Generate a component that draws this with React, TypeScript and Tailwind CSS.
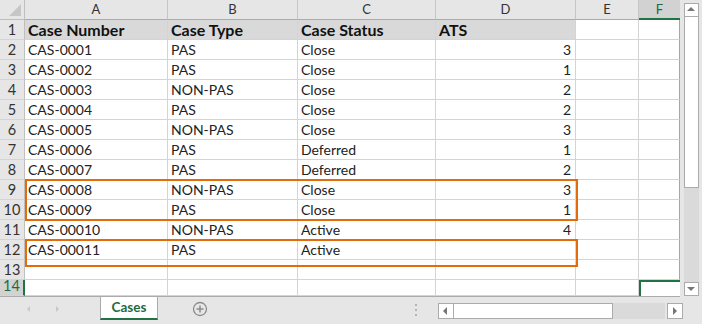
import React from 'react';

type Row = [string, string, string, string];

const COLS = ['A', 'B', 'C', 'D', 'E', 'F'];

const ROWS: Row[] = [
  ['CAS-0001', 'PAS', 'Close', '3'],
  ['CAS-0002', 'PAS', 'Close', '1'],
  ['CAS-0003', 'NON-PAS', 'Close', '2'],
  ['CAS-0004', 'PAS', 'Close', '2'],
  ['CAS-0005', 'NON-PAS', 'Close', '3'],
  ['CAS-0006', 'PAS', 'Deferred', '1'],
  ['CAS-0007', 'PAS', 'Deferred', '2'],
  ['CAS-0008', 'NON-PAS', 'Close', '3'],
  ['CAS-0009', 'PAS', 'Close', '1'],
  ['CAS-00010', 'NON-PAS', 'Active', '4'],
  ['CAS-00011', 'PAS', 'Active', ''],
  ['', '', '', ''],
];

const font = { fontFamily: 'Lato, "Liberation Sans", sans-serif' };

function RowHead({ n, selected, short }: { n: number; selected?: boolean; short?: boolean }) {
  return (
    <div
      className={`flex items-end justify-center text-[14.5px] leading-[18px] ${short ? 'h-[16px]' : 'h-[20px]'} ${
        selected
          ? 'border-r-2 border-r-[#217346] bg-[#d2d2d2] text-[#1e6b41]'
          : 'border-r border-r-[#bfbfbf] bg-[#e6e6e6] text-[#333]'
      } border-b border-b-[#d4d4d4]`}
    >
      {n}
    </div>
  );
}

function Cell({ children, right, last, short }: { children?: React.ReactNode; right?: boolean; last?: boolean; short?: boolean }) {
  return (
    <div
      className={`flex items-end overflow-hidden whitespace-nowrap text-[14px] leading-[18px] text-[#222] ${short ? 'h-[16px]' : 'h-[20px]'} ${
        right ? 'justify-end pr-[4px]' : 'pl-[3px]'
      } border-b border-b-[#d4d4d4] ${last ? 'border-r border-r-[#a6a6a6]' : 'border-r border-r-[#d4d4d4]'}`}
    >
      {children}
    </div>
  );
}

function Tri({ dir }: { dir: 'up' | 'down' | 'left' | 'right' }) {
  const pts = {
    up: '1,6 9,6 5,2',
    down: '1,3 9,3 5,7',
    left: '6,1 6,9 2,5',
    right: '3,1 3,9 7,5',
  }[dir];
  return (
    <svg width="10" height="10" viewBox="0 0 10 10">
      <polygon points={pts} fill="#777" />
    </svg>
  );
}

export default function App() {
  return (
    <div className="h-[324px] w-[702px] overflow-hidden bg-white" style={font}>
      <div className="relative flex h-[297px]">
        <div className="grid w-[680px] grid-cols-[25px_143px_130px_138px_140px_63px_41px] content-start border-b border-b-[#ababab]">
          {/* corner */}
          <div className="relative h-[20px] border-b border-r border-[#bfbfbf] bg-[#e6e6e6]">
            <svg className="absolute bottom-[3px] right-[3px]" width="12" height="12" viewBox="0 0 12 12">
              <polygon points="12,0 12,12 0,12" fill="#c6c6c6" />
            </svg>
          </div>
          {COLS.map((c) =>
            c === 'F' ? (
              <div key={c} className="flex h-[20px] items-center justify-center border-b-2 border-b-[#217346] bg-[#d2d2d2] pt-[1px] text-[13px] text-[#1e6b41]">
                {c}
              </div>
            ) : (
              <div key={c} className="flex h-[20px] items-center justify-center border-b border-r border-b-[#ababab] border-r-[#c6c6c6] bg-[#e6e6e6] text-[13px] text-[#333]">
                {c}
              </div>
            ),
          )}

          {/* row 1 */}
          <RowHead n={1} />
          {['Case Number', 'Case Type', 'Case Status', 'ATS'].map((h) => (
            <div key={h} className="flex h-[20px] items-end border-b border-r border-[#d4d4d4] bg-[#d9d9d9] pl-[3px] text-[16px] leading-[19px] font-bold text-[#111]">
              {h}
            </div>
          ))}
          <Cell />
          <Cell last />

          {ROWS.map((r, i) => (
            <React.Fragment key={i}>
              <RowHead n={i + 2} />
              <Cell>{r[0]}</Cell>
              <Cell>{r[1]}</Cell>
              <Cell>{r[2]}</Cell>
              <Cell right>{r[3]}</Cell>
              <Cell />
              <Cell last />
            </React.Fragment>
          ))}

          {/* row 14 */}
          <RowHead n={14} selected short />
          <Cell short />
          <Cell short />
          <Cell short />
          <Cell short />
          <Cell short />
          <div className="h-[16px] border-l-2 border-t-2 border-[#217346]" />
        </div>

        {/* vertical scrollbar */}
        <div className="flex w-[22px] flex-col items-center bg-[#e6e6e6] pt-[3px]">
          <div className="flex h-[14px] w-[15px] items-center justify-center border border-[#ababab] bg-white">
            <Tri dir="up" />
          </div>
          <div className="h-[171px] w-[15px] border border-t-0 border-[#ababab] bg-white" />
          <div className="w-[15px] flex-1 bg-[#dadada]" />
          <div className="mb-[1px] flex h-[14px] w-[15px] items-center justify-center border border-[#ababab] bg-white">
            <Tri dir="down" />
          </div>
        </div>

        {/* orange boxes */}
        <div className="absolute left-[25px] top-[179px] h-[42px] w-[553px] border-2 border-[#e26b0a]" />
        <div className="absolute left-[25px] top-[239px] h-[28px] w-[553px] border-2 border-[#e26b0a]" />
      </div>

      {/* sheet tab bar */}
      <div className="flex h-[27px] items-start bg-[#e6e6e6]">
        <div className="flex h-[24px] w-[100px] items-center gap-[18px] pl-[24px]">
          <svg width="10" height="10" viewBox="0 0 10 10">
            <polygon points="6,2 6,8 3,5" fill="#c8c8c8" />
          </svg>
          <svg width="10" height="10" viewBox="0 0 10 10">
            <polygon points="4,2 4,8 7,5" fill="#c8c8c8" />
          </svg>
        </div>
        <div className="-mt-[1px] flex h-[24px] w-[58px] items-center justify-center border-x border-b-2 border-x-[#ababab] border-b-[#217346] bg-white text-[13.5px] font-bold text-[#1e6b41]">
          Cases
        </div>
        <div className="flex h-[24px] w-[84px] items-center justify-center pr-[1px]">
          <svg width="16" height="16" viewBox="0 0 16 16">
            <circle cx="8" cy="8" r="6.5" fill="none" stroke="#8c8c8c" strokeWidth="1.3" />
            <path d="M8 4.5v7M4.5 8h7" stroke="#8c8c8c" strokeWidth="1.5" />
          </svg>
        </div>
        <div className="flex-1" />
        <div className="flex h-[24px] w-[16px] flex-col items-center justify-center gap-[3px] pt-[1px]">
          <span className="h-[2px] w-[2px] bg-[#b4b4b4]" />
          <span className="h-[2px] w-[2px] bg-[#b4b4b4]" />
          <span className="h-[2px] w-[2px] bg-[#b4b4b4]" />
        </div>
        <div className="ml-[14px] mr-[19px] mt-[6px] flex h-[16px] w-[245px]">
          <div className="flex h-[16px] w-[16px] items-center justify-center border border-[#ababab] bg-white">
            <Tri dir="left" />
          </div>
          <div className="h-[16px] w-[159px] border border-l-0 border-[#ababab] bg-white" />
          <div className="h-[16px] flex-1 bg-[#dadada]" />
          <div className="ml-[2px] flex h-[16px] w-[16px] items-center justify-center border border-[#ababab] bg-white">
            <Tri dir="right" />
          </div>
        </div>
      </div>
    </div>
  );
}
